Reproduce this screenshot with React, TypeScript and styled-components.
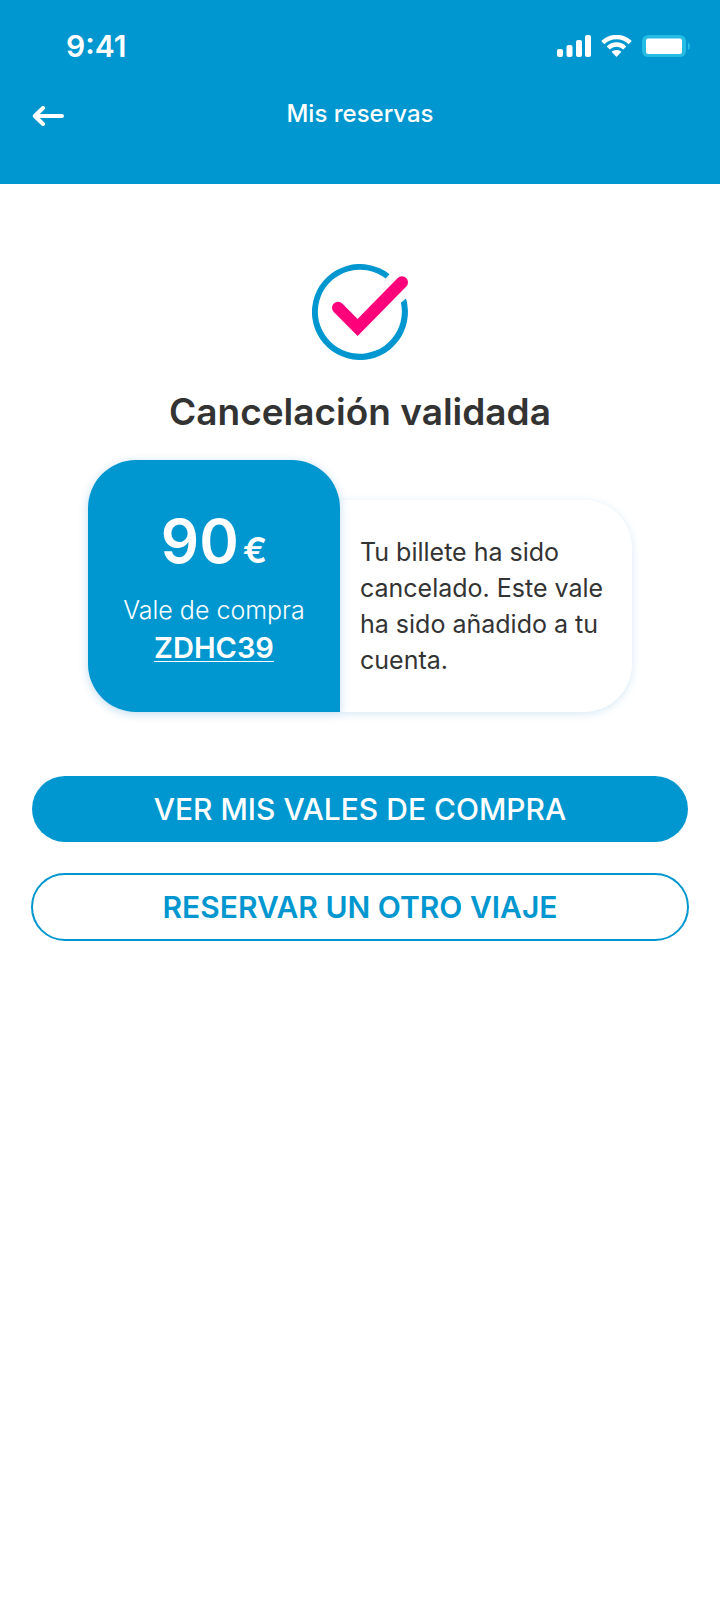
import React from "react";
import styled, { createGlobalStyle } from "styled-components";

const blue = "#0097d0";
const ink = "#333333";

const GlobalStyle = createGlobalStyle`
  *, *::before, *::after { box-sizing: border-box; }
  body {
    margin: 0;
    background: #fff;
    color: ${ink};
    font-family: Inter, "Open Sans", sans-serif;
    font-size: 25px;
  }
`;

const Page = styled.div`
  display: flex;
  flex-direction: column;
  min-height: 100vh;
`;

const Header = styled.header`
  padding: 26px 32px 52px;
  background: ${blue};
  color: #fff;
`;

const StatusBar = styled.div`
  display: flex;
  align-items: center;
  justify-content: space-between;
  height: 40px;
  padding-left: 34px;
`;

const Time = styled.time`
  font-size: 30px;
  line-height: 40px;
  font-weight: 600;
`;

const StatusIcons = styled.div`
  display: flex;
  align-items: center;
  gap: 10px;
  margin-right: -3px;
`;

const NavBar = styled.nav`
  display: grid;
  grid-template-columns: 40px 1fr 40px;
  align-items: center;
  padding-top: 30px;
`;

const BackButton = styled.button`
  display: flex;
  padding: 4px 0 0;
  border: 0;
  background: none;
  color: inherit;
  cursor: pointer;
`;

const ScreenTitle = styled.h1`
  margin: 0;
  font-size: 24px;
  line-height: 36px;
  font-weight: 500;
  text-align: center;
`;

const Content = styled.main`
  display: flex;
  flex-direction: column;
  align-items: center;
  padding: 80px 32px;
`;

const Heading = styled.h2`
  margin: 28px 0 24px;
  font-size: 37px;
  line-height: 48px;
  font-weight: 600;
  text-align: center;
`;

const Voucher = styled.section`
  display: flex;
  align-items: flex-end;
  width: 100%;
  max-width: 544px;
`;

const VoucherValue = styled.div`
  position: relative;
  display: flex;
  flex-direction: column;
  align-items: center;
  justify-content: center;
  flex: 0 0 252px;
  height: 252px;
  border-radius: 48px 48px 0 48px;
  background: ${blue};
  color: #fff;
  box-shadow: 0 2px 10px rgba(0, 120, 200, 0.25);
`;

const Amount = styled.p`
  margin: 0;
  font-size: 60px;
  line-height: 72px;
  font-weight: 600;
`;

const Currency = styled.span`
  margin-left: 4px;
  font-size: 36px;
`;

const VoucherLabel = styled.p`
  margin: 6px 0 0;
  font-size: 25px;
  line-height: 36px;
  font-weight: 300;
`;

const VoucherCode = styled.a`
  color: inherit;
  font-size: 29px;
  line-height: 40px;
  font-weight: 600;
  text-decoration-thickness: 1px;
  text-underline-offset: 3px;
`;

const VoucherNote = styled.p`
  display: flex;
  align-items: center;
  flex: 1;
  min-height: 212px;
  margin: 0;
  padding: 24px 20px;
  border-radius: 0 48px 48px 0;
  background: #fff;
  line-height: 36px;
  font-weight: 400;
  box-shadow: 0 2px 8px rgba(0, 120, 200, 0.16);
`;

const Actions = styled.div`
  display: flex;
  flex-direction: column;
  gap: 31px;
  align-self: stretch;
  margin-top: 64px;
`;

const Button = styled.button<{ $outline?: boolean }>`
  min-height: ${(p) => (p.$outline ? 68 : 66)}px;
  margin: 0 ${(p) => (p.$outline ? -1 : 0)}px;
  padding: 0 24px;
  border: ${(p) => (p.$outline ? `2px solid ${blue}` : "0")};
  border-radius: 34px;
  background: ${(p) => (p.$outline ? "#fff" : blue)};
  color: ${(p) => (p.$outline ? blue : "#fff")};
  font-family: inherit;
  font-size: 30px;
  line-height: 36px;
  font-weight: ${(p) => (p.$outline ? 600 : 500)};
  text-transform: uppercase;
  cursor: pointer;
`;

const SignalIcon = () => (
  <svg width="34" height="22" viewBox="0 0 34 22" fill="#fff" aria-hidden="true">
    <rect x="0" y="14" width="6" height="8" rx="2" />
    <rect x="9.5" y="10" width="6" height="12" rx="2" />
    <rect x="19" y="5" width="6" height="17" rx="2" />
    <rect x="28" y="0" width="6" height="22" rx="2" />
  </svg>
);

const WifiIcon = () => (
  <svg width="31" height="22" viewBox="0 0 31 22" fill="none" aria-hidden="true">
    <path d="M1.8 7.6C9.6 0.1 21.4 0.1 29.2 7.6" stroke="#fff" strokeWidth="4.4" />
    <path d="M7.2 13C12 8.4 19 8.4 23.8 13" stroke="#fff" strokeWidth="4.4" />
    <path d="M10.6 16.8C13.4 14.3 17.6 14.3 20.4 16.8L15.5 22Z" fill="#fff" />
  </svg>
);

const BatteryIcon = () => (
  <svg width="49" height="22" viewBox="0 0 49 22" aria-hidden="true">
    <rect width="44" height="22" rx="6" fill="#26bbe4" />
    <rect x="4" y="3.5" width="36" height="15.5" rx="2" fill="#fff" />
    <path d="M46 7.5C48.8 9 48.8 13.5 46 15Z" fill="#26bbe4" />
  </svg>
);

const ArrowLeftIcon = () => (
  <svg width="32" height="20" viewBox="0 0 32 20" fill="none" aria-hidden="true">
    <path
      d="M30 10H3M11 2L2.8 10L11 18"
      stroke="#fff"
      strokeWidth="4"
      strokeLinecap="round"
      strokeLinejoin="round"
    />
  </svg>
);

const ValidatedIcon = () => (
  <svg width="96" height="96" viewBox="0 0 96 96" fill="none" aria-hidden="true">
    <path
      d="M77.5 10.2A48 48 0 1 0 94 34.5L88.9 38.8A42 42 0 1 1 73.7 14.6Z"
      fill={blue}
    />
    <path d="M26 43.8L45.6 63.4L90 18.2" stroke="#ff007b" strokeWidth="12" strokeLinecap="round" />
  </svg>
);

export default function App() {
  return (
    <Page>
      <GlobalStyle />
      <Header>
        <StatusBar>
          <Time>9:41</Time>
          <StatusIcons>
            <SignalIcon />
            <WifiIcon />
            <BatteryIcon />
          </StatusIcons>
        </StatusBar>
        <NavBar>
          <BackButton type="button" aria-label="Volver">
            <ArrowLeftIcon />
          </BackButton>
          <ScreenTitle>Mis reservas</ScreenTitle>
        </NavBar>
      </Header>
      <Content>
        <ValidatedIcon />
        <Heading>Cancelación validada</Heading>
        <Voucher>
          <VoucherValue>
            <Amount>
              90<Currency>€</Currency>
            </Amount>
            <VoucherLabel>Vale de compra</VoucherLabel>
            <VoucherCode href="#vale">ZDHC39</VoucherCode>
          </VoucherValue>
          <VoucherNote>
            Tu billete ha sido cancelado. Este vale ha sido añadido a tu cuenta.
          </VoucherNote>
        </Voucher>
        <Actions>
          <Button type="button">Ver mis vales de compra</Button>
          <Button type="button" $outline>
            Reservar un otro viaje
          </Button>
        </Actions>
      </Content>
    </Page>
  );
}
